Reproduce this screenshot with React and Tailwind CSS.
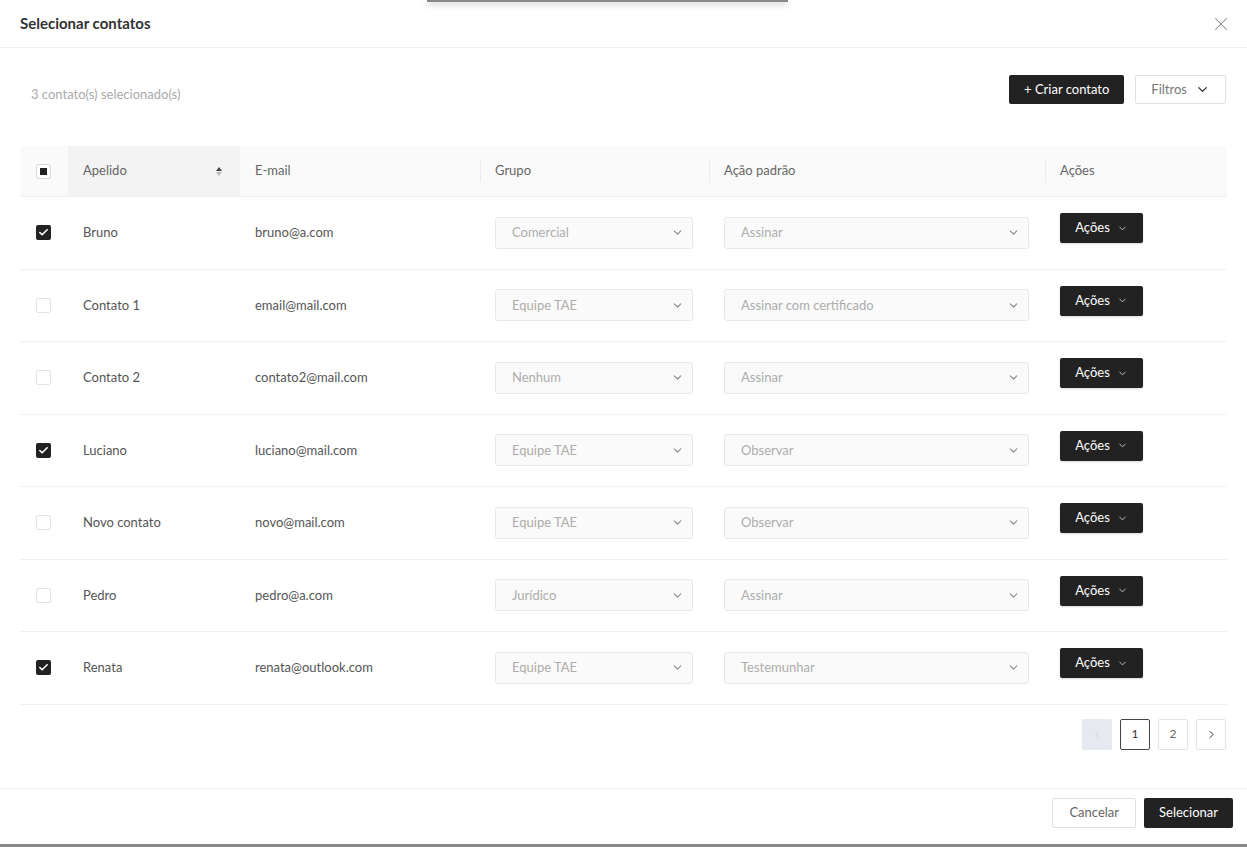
import React from 'react';
import { ChevronDown, ChevronLeft, ChevronRight, X, Check } from 'lucide-react';

const contacts = [
  { name: 'Bruno', email: 'bruno@a.com', group: 'Comercial', action: 'Assinar', checked: true },
  { name: 'Contato 1', email: 'email@mail.com', group: 'Equipe TAE', action: 'Assinar com certificado', checked: false },
  { name: 'Contato 2', email: 'contato2@mail.com', group: 'Nenhum', action: 'Assinar', checked: false },
  { name: 'Luciano', email: 'luciano@mail.com', group: 'Equipe TAE', action: 'Observar', checked: true },
  { name: 'Novo contato', email: 'novo@mail.com', group: 'Equipe TAE', action: 'Observar', checked: false },
  { name: 'Pedro', email: 'pedro@a.com', group: 'Jurídico', action: 'Assinar', checked: false },
  { name: 'Renata', email: 'renata@outlook.com', group: 'Equipe TAE', action: 'Testemunhar', checked: true },
];

const cols = 'grid grid-cols-[48px_172px_240px_229px_336px_181px]';

const CheckBox = ({ checked }) => (
  checked ? (
    <span className="w-[15px] h-[15px] rounded-[2px] bg-[#222] flex items-center justify-center">
      <Check size={11} strokeWidth={3.5} className="text-white" />
    </span>
  ) : (
    <span className="w-[15px] h-[15px] rounded-[2px] border border-[#e3e3e3] bg-white" />
  )
);

const FakeSelect = ({ value, width }) => (
  <div className={`${width} h-8 rounded-[3px] border border-[#e8e8e8] bg-[#fafafa] flex items-center justify-between pl-4 pr-2`}>
    <span className="text-[13px] text-[#adadad]">{value}</span>
    <ChevronDown size={13} strokeWidth={2} className="text-[#888]" />
  </div>
);

const HeaderSep = () => <span className="absolute left-0 top-1/2 -translate-y-1/2 w-px h-[22px] bg-[#ebebeb]" />;

export default function App() {
  return (
    <div className="relative w-full h-[847px] bg-white flex flex-col text-[#555]" style={{ fontFamily: 'Lato, "Noto Sans", sans-serif' }}>
      {/* stacked modal shadow */}
      <div className="absolute left-[427px] top-0 w-[361px] h-[2px] bg-[#888] shadow-[0_2px_6px_rgba(0,0,0,0.35)]" />

      {/* Header */}
      <div className="h-12 shrink-0 flex items-center justify-between px-5 border-b border-[#f0f0f0]">
        <h2 className="text-[15px] font-bold text-[#333]">Selecionar contatos</h2>
        <X size={22} strokeWidth={1.1} className="text-[#888] mr-[-5px]" />
      </div>

      {/* Body */}
      <div className="flex-1 px-5">
        <div className="flex items-end justify-between mt-[27px]">
          <span className="pl-[11px] pb-0 text-[13px] text-[#aaa]">3 contato(s) selecionado(s)</span>
          <div className="flex items-center gap-[11px] pr-[1px]">
            <button className="h-[29px] px-[15px] rounded-[2px] bg-[#222] text-white text-[13px]">+ Criar contato</button>
            <button className="h-[29px] px-[15px] rounded-[2px] border border-[#e0e0e0] bg-white text-[#777] text-[13px] flex items-center gap-[8px]">
              Filtros <ChevronDown size={15} strokeWidth={2.2} className="text-[#333]" />
            </button>
          </div>
        </div>

        {/* Table */}
        <div className="mt-[42px]">
          <div className={`${cols} h-[51px] bg-[#fafafa] border-b border-[#f0f0f0] text-[13px] text-[#666]`}>
            <div className="flex items-center pl-4">
              <span className="w-[15px] h-[15px] border border-[#d9d9d9] bg-white rounded-[2px] flex items-center justify-center">
                <span className="w-[7px] h-[7px] bg-[#222]" />
              </span>
            </div>
            <div className="flex items-center justify-between pl-[15px] pr-[18px] bg-[#f3f3f3]">
              <span>Apelido</span>
              <span className="flex flex-col items-center gap-[1px]">
                <span className="w-0 h-0 border-x-[3.5px] border-x-transparent border-b-[4px] border-b-[#444]" />
                <span className="w-0 h-0 border-x-[3.5px] border-x-transparent border-t-[4px] border-t-[#bbb]" />
              </span>
            </div>
            <div className="flex items-center pl-[15px]">E-mail</div>
            <div className="relative flex items-center pl-[15px]"><HeaderSep />Grupo</div>
            <div className="relative flex items-center pl-[15px]"><HeaderSep />Ação padrão</div>
            <div className="relative flex items-center pl-[15px]"><HeaderSep />Ações</div>
          </div>

          {contacts.map((c) => (
            <div key={c.email} className={`${cols} h-[72.5px] border-b border-[#f0f0f0] text-[13px] text-[#555]`}>
              <div className="flex items-center pl-4"><CheckBox checked={c.checked} /></div>
              <div className="flex items-center pl-[15px]">{c.name}</div>
              <div className="flex items-center pl-[15px]">{c.email}</div>
              <div className="flex items-center pl-[15px]"><FakeSelect value={c.group} width="w-[198px]" /></div>
              <div className="flex items-center pl-[15px]"><FakeSelect value={c.action} width="w-[305px]" /></div>
              <div className="flex items-start pl-[15px] pt-[16px]">
                <button className="h-[30px] w-[83px] rounded-[2px] bg-[#222] text-white text-[13px] flex items-center justify-center gap-[7px] shadow-[0_1px_2px_rgba(0,0,0,0.15)]">
                  Ações <ChevronDown size={11} strokeWidth={1.5} />
                </button>
              </div>
            </div>
          ))}
        </div>

        {/* Pagination */}
        <div className="flex justify-end items-center gap-[8px] mt-[14px] pr-[1px] text-[12px]">
          <span className="w-[30px] h-[31px] rounded-[2px] bg-[#e6e9ef] border border-[#e6e9ef] flex items-center justify-center text-[#c8ccd4]">
            <ChevronLeft size={13} strokeWidth={1.5} />
          </span>
          <span className="w-[30px] h-[31px] rounded-[2px] border border-[#444] flex items-center justify-center text-[#333]">1</span>
          <span className="w-[30px] h-[31px] rounded-[2px] border border-[#e3e3e3] flex items-center justify-center text-[#666]">2</span>
          <span className="w-[30px] h-[31px] rounded-[2px] border border-[#e3e3e3] flex items-center justify-center text-[#333]">
            <ChevronRight size={13} strokeWidth={1.8} />
          </span>
        </div>
      </div>

      {/* Footer */}
      <div className="h-[56px] shrink-0 border-t border-[#f0f0f0] flex justify-end items-start pt-[9px] pr-[14px] gap-[8px]">
        <button className="h-[30px] px-[16px] rounded-[2px] border border-[#e0e0e0] bg-white text-[#666] text-[13px]">Cancelar</button>
        <button className="h-[30px] px-[15px] rounded-[2px] bg-[#222] text-white text-[13px]">Selecionar</button>
      </div>
      <div className="h-[3px] shrink-0 bg-[#888]" />
    </div>
  );
}
